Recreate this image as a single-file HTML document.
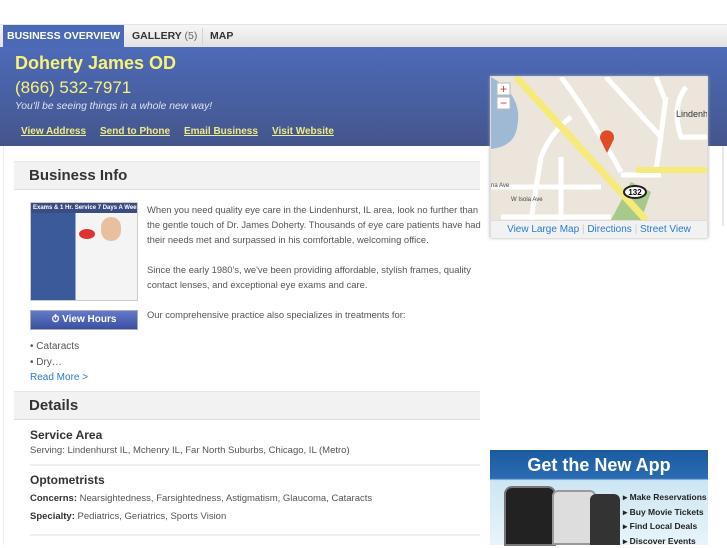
<!DOCTYPE html>
<html><head><meta charset="utf-8"><style>
*{margin:0;padding:0;box-sizing:border-box}
body{width:727px;height:545px;overflow:hidden;background:#fff;font-family:"Liberation Sans",Arial,sans-serif;position:relative;color:#444}
.abs{position:absolute}
.tabs{left:0;top:24px;width:727px;height:23px;background:linear-gradient(#f6f6f6,#e2e2e2);border-top:1px solid #e4e4e4}
.tab{position:absolute;top:0;height:22px;line-height:22px;font-size:10.5px;font-weight:bold;color:#333}
.hdr{left:0;top:47px;width:727px;height:99px;background:linear-gradient(#4d6bb8,#44558c)}
.y{color:#f7f27a}
.lnk{position:absolute;top:126px;font-size:10px;font-weight:bold;color:#f0ec86;text-decoration:underline}
.sh{background:#f2f2f2;border-top:1px solid #e6e6e6;border-bottom:1px solid #ddd;left:14px;width:466px;font-size:15px;font-weight:bold;color:#333;padding-left:15px}
.p{font-size:9.4px;color:#555;line-height:15px}
</style></head><body>
<div class="abs tabs">
 <div class="tab" style="left:3px;width:121px;background:#4b6ab6;color:#fff;text-align:center">BUSINESS OVERVIEW</div>
 <div class="tab" style="left:132px">GALLERY <span style="font-weight:normal;color:#666">(5)</span></div>
 <div class="abs" style="left:202px;top:3px;width:1px;height:17px;background:#d4d4d4"></div>
 <div class="tab" style="left:210px">MAP</div>
</div>
<div class="abs hdr">
 <div class="abs y" style="left:15px;top:6px;font-size:18px;font-weight:bold">Doherty James OD</div>
 <div class="abs y" style="left:15px;top:31px;font-size:17px">(866) 532-7971</div>
 <div class="abs" style="left:15px;top:54px;font-size:10.3px;font-style:italic;color:#e0e4f0">You'll be seeing things in a whole new way!</div>
</div>
<div class="lnk" style="left:21px">View Address</div>
<div class="lnk" style="left:100px">Send to Phone</div>
<div class="lnk" style="left:184px">Email Business</div>
<div class="lnk" style="left:272px">Visit Website</div>
<div class="abs" style="left:3px;top:146px;width:1px;height:399px;background:#eee"></div>
<div class="abs" style="left:722px;top:146px;width:2px;height:80px;background:#e8e8e8"></div>

<div class="abs sh" style="top:161px;height:29px;line-height:27px">Business Info</div>
<div class="abs" style="left:30px;top:202px;width:108px;height:99px;border:1px solid #ccc;background:linear-gradient(90deg,#3a5a9a 0 42%,#f4f4f4 42%)">
 <div style="height:10px;background:#3b4c82;color:#fff;font-size:6px;font-weight:bold;line-height:10px;padding-left:2px;white-space:nowrap;overflow:hidden">Exams &amp; 1 Hr. Service 7 Days A Week</div>
 <div class="abs" style="left:70px;top:14px;width:20px;height:24px;border-radius:10px;background:#e8c0a0"></div>
 <div class="abs" style="left:48px;top:26px;width:16px;height:10px;border-radius:50%;background:#d33"></div>
</div>
<div class="abs" style="left:30px;top:310px;width:108px;height:20px;background:linear-gradient(#6479c8,#3b4fa0);border:1px solid #aab;color:#fff;font-size:10px;font-weight:bold;text-align:center;line-height:18px">&#9201; View Hours</div>
<div class="abs p" style="left:147px;top:202px;width:336px">When you need quality eye care in the Lindenhurst, IL area, look no further than the gentle touch of Dr. James Doherty. Thousands of eye care patients have had their needs met and surpassed in his comfortable, welcoming office.<br><br>Since the early 1980's, we've been providing affordable, stylish frames, quality contact lenses, and exceptional eye exams and care.<br><br>Our comprehensive practice also specializes in treatments for:</div>
<div class="abs" style="left:30px;top:339px;font-size:10px;color:#555;line-height:15.5px">• Cataracts<br>• Dry…<br><span style="color:#2a7ad0">Read More &gt;</span></div>

<div class="abs sh" style="top:391px;height:29px;line-height:27px">Details</div>
<div class="abs" style="left:30px;top:428px;font-size:12px;font-weight:bold;color:#333">Service Area</div>
<div class="abs" style="left:30px;top:445px;font-size:9.5px;color:#555">Serving: Lindenhurst IL, Mchenry IL, Far North Suburbs, Chicago, IL (Metro)</div>
<div class="abs" style="left:30px;top:464px;width:450px;height:2px;background:#eee"></div>
<div class="abs" style="left:30px;top:473px;font-size:12px;font-weight:bold;color:#333">Optometrists</div>
<div class="abs" style="left:30px;top:493px;font-size:9.5px;color:#555"><b style="color:#333">Concerns:</b> Nearsightedness, Farsightedness, Astigmatism, Glaucoma, Cataracts</div>
<div class="abs" style="left:30px;top:511px;font-size:9.5px;color:#555"><b style="color:#333">Specialty:</b> Pediatrics, Geriatrics, Sports Vision</div>
<div class="abs" style="left:30px;top:534px;width:450px;height:2px;background:#eee"></div>

<div class="abs" style="left:490px;top:76px;width:218px;height:162px;border:1px solid #ddd;background:#fff;box-shadow:0 0 3px #aaa">
 <svg width="216" height="143" style="display:block;background:#ebe5dc">
  <path d="M0 0 Q35 20 25 55 Q20 70 0 72Z" fill="#9fb8d4"/>
  <path d="M120 143 L140 105 L160 115 L150 143Z" fill="#a8c88c"/>
  <g stroke="#fff" stroke-width="5" fill="none">
   <path d="M70 0 Q100 40 130 95"/><path d="M40 143 L50 80 Q60 55 80 40"/><path d="M0 110 L110 110"/><path d="M10 140 L120 140"/><path d="M70 80 L70 143"/><path d="M115 0 L170 60"/><path d="M175 20 L165 95"/><path d="M130 98 L170 98"/><path d="M195 10 Q180 30 190 60 L216 60"/><path d="M165 0 L175 25"/>
  </g>
  <path d="M25 0 L155 143" stroke="#f5ea7a" stroke-width="7"/>
  <path d="M145 93 L216 93" stroke="#f5ea7a" stroke-width="6"/>
  <ellipse cx="144" cy="115" rx="11" ry="6" fill="#fff" stroke="#222" stroke-width="2"/>
  <text x="144" y="118" font-size="8" font-weight="bold" text-anchor="middle" font-family="Liberation Sans">132</text>
  <path d="M116 76 L110 64 A7 7 0 1 1 122 64Z" fill="#e04c25"/>
  <text x="185" y="40" font-size="9" fill="#333" font-family="Liberation Sans">Lindenhurs</text>
  <text x="0" y="110" font-size="6" fill="#444" font-family="Liberation Sans">na Ave</text>
  <text x="20" y="124" font-size="6" fill="#444" font-family="Liberation Sans">W Isola Ave</text>
  <rect x="6" y="6" width="13" height="12" fill="#fff" stroke="#bbb"/><text x="12.5" y="16" font-size="12" fill="#d33" text-anchor="middle">+</text>
  <rect x="6" y="20" width="13" height="12" fill="#fff" stroke="#bbb"/><text x="12.5" y="30" font-size="12" fill="#d33" text-anchor="middle">−</text>
 </svg>
 <div style="height:18px;background:#f2f2f2;border-top:1px solid #ddd;font-size:10px;color:#2a7ad0;text-align:center;line-height:17px">View Large Map <span style="color:#ccc">|</span> Directions <span style="color:#ccc">|</span> Street View</div>
</div>

<div class="abs" style="left:490px;top:450px;width:218px;height:95px;background:linear-gradient(#1b5aa0 0,#2a6cb4 30%,#cde6f3 32%,#e8f4fa)">
 <div style="color:#fff;font-size:18px;font-weight:bold;text-align:center;margin-top:5px">Get the New App</div>
 <div class="abs" style="left:14px;top:36px;width:52px;height:60px;background:#222;border-radius:8px 8px 0 0;border:2px solid #777"></div>
 <div class="abs" style="left:62px;top:40px;width:44px;height:55px;background:#ddd;border-radius:6px 6px 0 0;border:2px solid #999"></div>
 <div class="abs" style="left:100px;top:44px;width:30px;height:51px;background:#333;border-radius:6px 6px 0 0"></div>
 <div class="abs" style="left:133px;top:40px;font-size:8.5px;font-weight:bold;color:#222;line-height:14.5px">▸ Make Reservations<br>▸ Buy Movie Tickets<br>▸ Find Local Deals<br>▸ Discover Events</div>
</div>
</body></html>
